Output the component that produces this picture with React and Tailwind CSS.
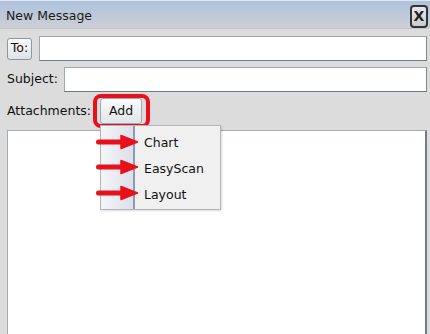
import React from "react";

function Arrow({ top }) {
  return (
    <svg className="absolute" style={{ left: 96, top: top }} width="44" height="16" viewBox="0 0 44 16">
      <line x1="2.5" y1="8" x2="28" y2="8" stroke="#e8101a" strokeWidth="5" strokeLinecap="round" />
      <polygon points="25,1.5 41.5,8 25,14.5" fill="#e8101a" stroke="#e8101a" strokeWidth="1.5" strokeLinejoin="round" />
    </svg>
  );
}

export default function App() {
  const font = { fontFamily: '"DejaVu Sans", Verdana, sans-serif' };
  return (
    <div className="relative w-[430px] h-[334px] overflow-hidden bg-[#dcdcdc] text-[12px] text-[#111]" style={font}>
      {/* title bar */}
      <div className="h-[29px] flex items-center justify-between pl-[6px] pr-[2px] border-t border-[#e4e8ee] border-b border-b-[#c4c6ca] bg-gradient-to-b from-[#adc2de] to-[#cdcfd4]">
        <span className="text-[12.5px] text-[#1a1a1a] mt-[4px]">New Message</span>
        <div className="w-[18px] h-[23px] mt-[3px] rounded-[4px] border-2 border-[#333] bg-gradient-to-b from-[#e6e8ec] to-[#c8ccd2] flex items-center justify-center font-bold text-[14px] text-[#222] leading-none">
          X
        </div>
      </div>

      <div className="pl-[7px] pr-[3px] pt-[7px] flex flex-col">
        {/* To row */}
        <div className="flex items-center gap-[7px] h-[25px]">
          <button className="w-[25px] h-[22px] rounded-[3px] border border-[#8a96a4] bg-gradient-to-b from-[#fbfbfb] to-[#dfe2e6] text-[12.5px] flex items-center justify-center leading-none">
            To:
          </button>
          <div className="flex-1 h-[25px] bg-white border border-[#9ea7b2] border-b-[#6e7a88] border-r-[#7e8894]"></div>
        </div>
        {/* Subject row */}
        <div className="flex items-center gap-[6px] h-[25px] mt-[6px]">
          <span className="text-[12.5px] leading-none w-[51px]">Subject:</span>
          <div className="flex-1 h-[25px] bg-white border border-[#9ea7b2] border-b-[#6e7a88] border-r-[#7e8894]"></div>
        </div>
        {/* Attachments row */}
        <div className="flex items-center h-[26px] mt-[6px]">
          <span className="text-[12.5px] leading-none w-[93px]">Attachments:</span>
          <button className="w-[42px] h-[26px] rounded-[3px] border border-[#a0a8b2] bg-gradient-to-b from-[#fafafa] to-[#e2e4e8] text-[12.5px] flex items-center justify-center leading-none">
            Add
          </button>
        </div>
        {/* textarea */}
        <div className="mt-[6px] h-[220px] bg-white border border-[#a4acb6] border-r-2 border-r-[#6e7e90]"></div>
      </div>

      {/* red highlight around Add */}
      <div className="absolute left-[93px] top-[94px] w-[57px] h-[34px] rounded-[8px] border-4 border-[#e8101a]"></div>

      {/* dropdown menu */}
      <div className="absolute left-[100px] top-[125px] w-[121px] h-[85px] bg-[#f0f0f0] border border-[#b4b4bc] shadow-[1px_1px_2px_rgba(0,0,0,0.15)] flex">
        <div className="w-[34px] h-full bg-gradient-to-r from-[#f4f5f8] to-[#dde0ea] border-r-2 border-r-[#8f9ab0]"></div>
        <div className="flex flex-col pl-[9px] pt-[5px] text-[12.5px] leading-none">
          <div className="h-[25px] flex items-center">Chart</div>
          <div className="h-[26px] flex items-center">EasyScan</div>
          <div className="h-[26px] flex items-center">Layout</div>
        </div>
      </div>

      <Arrow top={134} />
      <Arrow top={159} />
      <Arrow top={185} />
    </div>
  );
}
